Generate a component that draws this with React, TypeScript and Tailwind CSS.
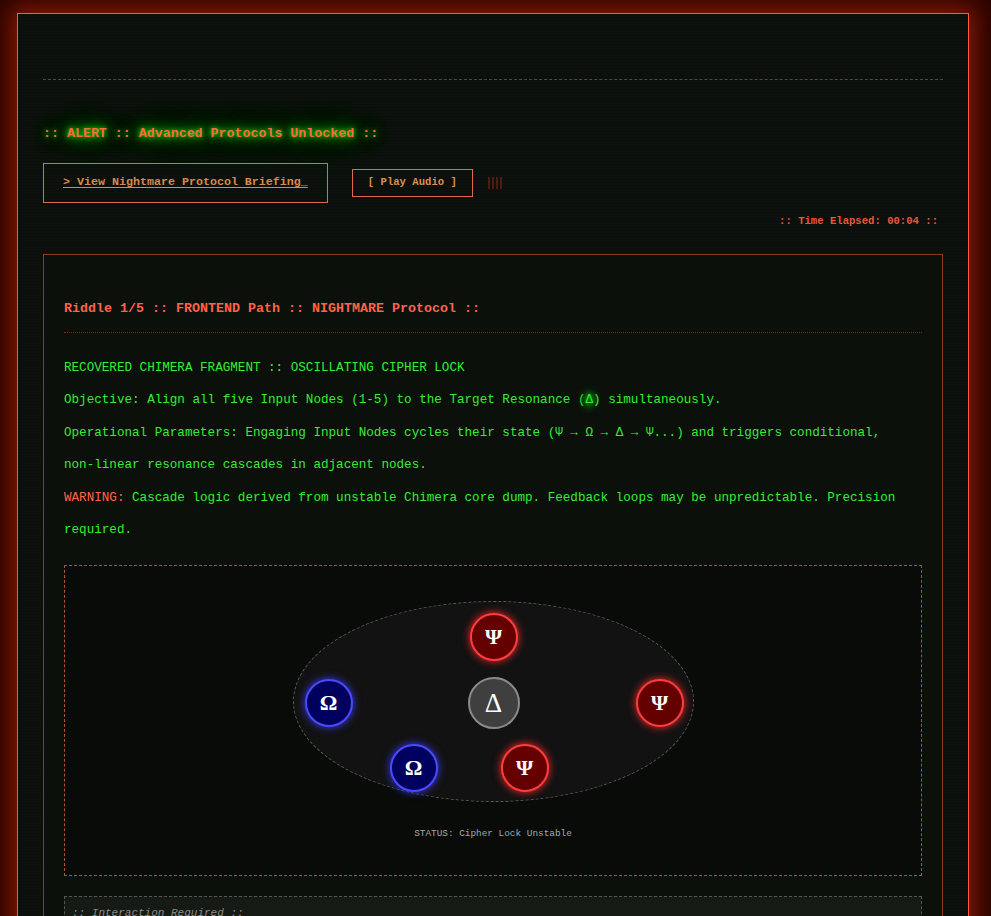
import React from "react";

const mono = { fontFamily: '"Liberation Mono", "DejaVu Sans Mono", monospace' };
const serif = { fontFamily: '"Liberation Serif", "DejaVu Serif", serif' };

type NodeKind = "psi" | "omega" | "delta";

function Node({ kind, left, top }: { kind: NodeKind; left: number; top: number }) {
  if (kind === "delta") {
    return (
      <div
        className="absolute w-[52px] h-[52px] rounded-full bg-[#3f3f3f] border-2 border-[#8a8a8a] flex items-center justify-center text-white text-[27px] leading-none"
        style={{ left, top, ...serif }}
      >
        Δ
      </div>
    );
  }
  const isPsi = kind === "psi";
  return (
    <div
      className={
        isPsi
          ? "absolute w-[48px] h-[48px] rounded-full bg-[#650000] border-2 border-[#ff3d3d] shadow-[0_0_8px_#ff2a2a] flex items-center justify-center text-white text-[22px] font-bold leading-none"
          : "absolute w-[48px] h-[48px] rounded-full bg-[#00005e] border-2 border-[#4a4aff] shadow-[0_0_8px_#3a3aff] flex items-center justify-center text-white text-[22px] font-bold leading-none"
      }
      style={{ left, top, ...serif }}
    >
      {isPsi ? "Ψ" : "Ω"}
    </div>
  );
}

export default function App() {
  return (
    <div className="min-h-screen w-full bg-[#2a0400] pt-[13px] pb-[40px] overflow-hidden" style={mono}>
      <div className="ml-[17px] w-[952px] border border-[#ff5a3a] bg-[#0d110d] shadow-[0_0_22px_6px_rgba(255,50,0,0.45)] px-[25px] pb-[40px] bg-[repeating-linear-gradient(0deg,rgba(0,0,0,0.18)_0px,rgba(0,0,0,0.18)_1px,transparent_1px,transparent_3px)]">
        <div className="h-[66px] border-b border-dashed border-[#4a4a4a]" />

        <div
          className="mt-[44px] text-[13.3px] leading-[20px] font-bold text-[#ff6b3d]"
          style={{ textShadow: "0 0 5px #00ff00, 0 0 12px #00cc00, 0 0 22px #00aa00, 0 0 34px #008800" }}
        >
          :: ALERT :: Advanced Protocols Unlocked ::
        </div>

        <div className="mt-[19px] flex items-center">
          <div className="h-[40px] border border-[#e0684f] px-[19px] flex items-center text-[11.67px] font-bold text-[#d98a4a] underline underline-offset-2">
            &gt; View Nightmare Protocol Briefing_
          </div>
          <div className="ml-[24px] h-[28px] border border-[#e0684f] px-[15px] flex items-center text-[10.6px] font-bold text-[#d99050]">
            [ Play Audio ]
          </div>
          <div className="ml-[15px] flex gap-[2px] items-center">
            <div className="w-[2px] h-[12px] bg-[#4e1a12]" />
            <div className="w-[2px] h-[12px] bg-[#4e1a12]" />
            <div className="w-[2px] h-[12px] bg-[#4e1a12]" />
            <div className="w-[2px] h-[12px] bg-[#4e1a12]" />
          </div>
        </div>

        <div className="mt-[11px] pr-[5px] text-right text-[10.6px] leading-[14px] font-bold text-[#e8573c]">
          :: Time Elapsed: 00:04 ::
        </div>

        <div className="mt-[26px] border border-[#8a3a1e] bg-[#0b100b] px-[20px] pt-[43px] pb-[30px]">
          <div className="text-[13.33px] leading-[22px] font-bold text-[#ff6347] pb-[12px] border-b border-dotted border-[#5a3a1a]">
            Riddle 1/5 :: FRONTEND Path :: NIGHTMARE Protocol ::
          </div>

          <div className="mt-[19px] text-[12.6px] leading-[32.4px] text-[#33ee33]">
            <p>RECOVERED CHIMERA FRAGMENT :: OSCILLATING CIPHER LOCK</p>
            <p>
              Objective: Align all five Input Nodes (1-5) to the Target Resonance (
              <span className="rounded-full bg-[#0c3a0c] shadow-[0_0_8px_#0a7a0a]" style={{ textShadow: "0 0 6px #00ff00" }}>
                Δ
              </span>
              ) simultaneously.
            </p>
            <p>
              Operational Parameters: Engaging Input Nodes cycles their state (Ψ → Ω → Δ → Ψ...) and triggers conditional,{" "}
              <span className="whitespace-nowrap">non-linear</span> resonance cascades in adjacent nodes.
            </p>
            <p>
              <span className="text-[#ff6347]">WARNING:</span> Cascade logic derived from unstable Chimera core dump. Feedback
              loops may be unpredictable. Precision required.
            </p>
          </div>

          <div className="mt-[19px] border border-dashed border-[#b0502c] bg-[#080b08] pt-[35px] pb-[34px] flex flex-col items-center">
            <div className="relative w-[401px] h-[201px] rounded-[50%] border border-dashed border-[#5a5a5a] bg-[#121212]">
              <Node kind="psi" left={176} top={11} />
              <Node kind="omega" left={11} top={77} />
              <Node kind="delta" left={174} top={75} />
              <Node kind="psi" left={342} top={77} />
              <Node kind="omega" left={96} top={142} />
              <Node kind="psi" left={207} top={142} />
            </div>
            <div className="mt-[25px] text-[9.4px] leading-[14px] text-[#a8a8a8]">STATUS: Cipher Lock Unstable</div>
          </div>

          <div className="mt-[20px] border border-dashed border-[#555] bg-[#151a15] px-[7px] py-[8px] h-[80px]">
            <div className="text-[11px] italic text-[#8a8a8a]">:: Interaction Required ::</div>
          </div>
        </div>
      </div>
    </div>
  );
}
